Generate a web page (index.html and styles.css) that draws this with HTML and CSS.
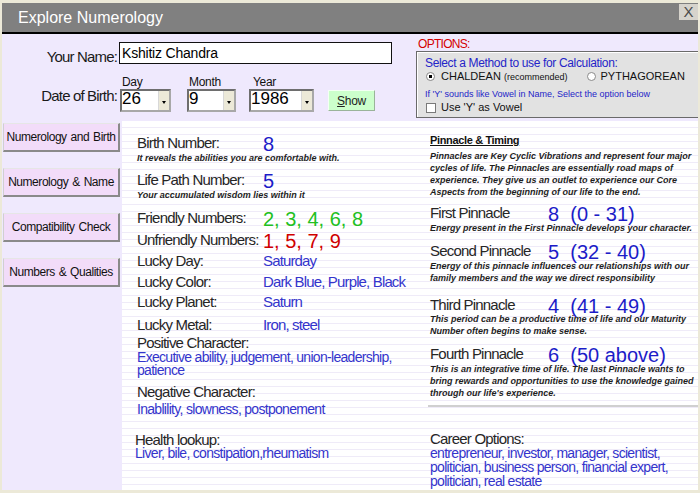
FILE: index.html
```html
<!DOCTYPE html>
<html>
<head>
<meta charset="utf-8">
<title>Explore Numerology</title>
<link rel="stylesheet" href="styles.css">
</head>
<body>
<div class="win">
  <div class="titlebar">
    <span class="title">Explore Numerology</span>
    <span class="close">X</span>
  </div>
  <div class="main">
    <div class="top">
      <div class="form">
        <div class="name-row">
          <span class="flabel">Your Name:</span>
          <div class="textbox">Kshitiz Chandra</div>
        </div>
        <div class="dob-row">
          <span class="flabel dob">Date of Birth:</span>
          <div class="field f-day">
            <span class="cap">Day</span>
            <div class="combo w-day"><span class="cv">26</span><span class="drop"><i></i></span></div>
          </div>
          <div class="field f-month">
            <span class="cap">Month</span>
            <div class="combo w-month"><span class="cv">9</span><span class="drop"><i></i></span></div>
          </div>
          <div class="field f-year">
            <span class="cap cap-year">Year</span>
            <div class="combo w-year"><span class="cv">1986</span><span class="drop"><i></i></span></div>
          </div>
          <div class="show"><u>S</u>how</div>
        </div>
      </div>
      <div class="opts">
        <div class="opt-title">OPTIONS:</div>
        <div class="opt-box">
          <div class="sel">Select a Method to use for Calculation:</div>
          <div class="radios">
            <span class="radio on"></span>
            <span class="rl">CHALDEAN <small>(recommended)</small></span>
            <span class="radio second"></span>
            <span class="rl rl2">PYTHAGOREAN</span>
          </div>
          <div class="hint">If 'Y' sounds like Vowel in Name, Select the option below</div>
          <div class="chk"><span class="box"></span><span>Use 'Y' as Vowel</span></div>
        </div>
      </div>
    </div>
    <div class="body">
      <div class="nav">
        <div class="navbtn">Numerology and Birth</div>
        <div class="navbtn">Numerology &amp; Name</div>
        <div class="navbtn">Compatibility Check</div>
        <div class="navbtn">Numbers &amp; Qualities</div>
      </div>
      <div class="panel">
        <div class="colL">
          <div class="row">
            <span class="lbl">Birth Number:</span><span class="big">8</span>
          </div>
          <div class="note">It reveals the abilities you are comfortable with.</div>

          <div class="row mt7">
            <span class="lbl">Life Path Number:</span><span class="big">5</span>
          </div>
          <div class="note">Your accumulated wisdom lies within it</div>

          <div class="row mt8">
            <span class="lbl">Friendly Numbers:</span><span class="big green">2, 3, 4, 6, 8</span>
          </div>
          <div class="row mt4">
            <span class="lbl">Unfriendly Numbers:</span><span class="big red">1, 5, 7, 9</span>
          </div>
          <div class="row mt3">
            <span class="lbl">Lucky Day:</span><span class="v">Saturday</span>
          </div>
          <div class="row mt3">
            <span class="lbl">Lucky Color:</span><span class="v">Dark Blue, Purple, Black</span>
          </div>
          <div class="row mt2">
            <span class="lbl">Lucky Planet:</span><span class="v">Saturn</span>
          </div>
          <div class="row mt5">
            <span class="lbl">Lucky Metal:</span><span class="v">Iron, steel</span>
          </div>

          <div class="lbl lh16 mt1">Positive Character:</div>
          <div class="v lh13 tight">Executive ability, judgement, union-leadership,<br>patience</div>

          <div class="lbl lh16 mt7">Negative Character:</div>
          <div class="v lh16 mt1 tight">Inablility, slowness, postponement</div>

          <div class="lbl lh14 mt16 shift">Health lookup:</div>
          <div class="v lh13 tight shift">Liver, bile, constipation,rheumatism</div>
        </div>

        <div class="colR">
          <div class="phead">Pinnacle &amp; Timing</div>
          <div class="note mt3">Pinnacles are Key Cyclic Vibrations and represent four major<br>cycles of life. The Pinnacles are essentially road maps of<br>experience. They give us an outlet to experience our Core<br>Aspects from the beginning of our life to the end.</div>

          <div class="row mt7">
            <span class="lbl plbl">First Pinnacle</span><span class="pval">8  (0 - 31)</span>
          </div>
          <div class="note mt1">Energy present in the First Pinnacle develops your character.</div>

          <div class="row mt9">
            <span class="lbl plbl">Second Pinnacle</span><span class="pval">5  (32 - 40)</span>
          </div>
          <div class="note mt1">Energy of this pinnacle influences our relationships with our<br>family members and the way we direct responsibility</div>

          <div class="row mt13">
            <span class="lbl plbl">Third Pinnacle</span><span class="pval">4  (41 - 49)</span>
          </div>
          <div class="note">This period can be a productive time of life and our Maturity<br>Number often begins to make sense.</div>

          <div class="row mt9">
            <span class="lbl plbl">Fourth Pinnacle</span><span class="pval">6  (50 above)</span>
          </div>
          <div class="note mt1">This is an integrative time of life. The last Pinnacle wants to<br>bring rewards and opportunities to use the knowledge gained<br>through our life's experience.</div>

          <div class="sep"></div>

          <div class="lbl lh14 career">Career Options:</div>
          <div class="v lh14 tight">entrepreneur, investor, manager, scientist,<br>politician, business person, financial expert,<br>politician, real estate</div>
        </div>
      </div>
    </div>
  </div>
</div>
</body>
</html>
```
FILE: styles.css
```css
* { box-sizing: border-box; }
html, body { margin: 0; padding: 0; }
body {
  width: 700px;
  height: 493px;
  overflow: hidden;
  background: #ece9d8;
  font-family: "Liberation Sans", Arial, sans-serif;
  color: #222;
}
.win {
  width: 700px;
  height: 493px;
  padding: 3px 2px 3px 2px;
  display: flex;
  flex-direction: column;
}
.titlebar {
  height: 31px;
  background: #808080;
  border-bottom: 2px solid #000;
  display: flex;
  justify-content: space-between;
  align-items: flex-start;
}
.title {
  font-size: 16px;
  line-height: 29px;
  color: #fff;
  padding-left: 16px;
}
.close {
  margin-top: 1px;
  width: 19px;
  height: 16px;
  background: #d6d3cc;
  color: #4a4a4a;
  font-size: 15px;
  line-height: 16px;
  text-align: center;
}
.main {
  flex: 1;
  background: #efe9fd;
  display: flex;
  flex-direction: column;
}
.top { height: 87px; display: flex; }
.form { width: 414px; }
.opts { flex: 1; padding-top: 3px; }

/* form */
.name-row { display: flex; margin-top: 8px; height: 22px; }
.flabel {
  width: 115px;
  text-align: right;
  font-size: 15px;
  line-height: 18px;
  letter-spacing: -0.85px;
  color: #1a1a1a;
  margin-right: 3px;
  white-space: nowrap;
}
.name-row .flabel { margin-top: 6px; margin-right: 2px; }
.textbox {
  width: 273px;
  height: 22px;
  border: 1px solid #111;
  background: #fff;
  font-size: 14px;
  line-height: 20px;
  padding-left: 2px;
  letter-spacing: -0.2px;
  color: #000;
}
.dob-row { display: flex; align-items: flex-end; margin-top: 12px; }
.dob { margin-bottom: 7px; }
.field { display: flex; flex-direction: column; }
.f-day { margin-right: 16px; }
.f-month { margin-right: 13px; }
.f-year { margin-right: 14px; }
.cap {
  font-size: 12px;
  line-height: 13px;
  padding-left: 2px;
  color: #111;
  letter-spacing: -0.3px;
}
.cap-year { padding-left: 4px; }
.combo {
  height: 23px;
  border: 2px solid;
  border-color: #6e6e6e #a8a8a8 #a8a8a8 #6e6e6e;
  background: #fff;
  display: flex;
}
.w-day { width: 51px; }
.w-month { width: 49px; }
.w-year { width: 65px; }
.cv { flex: 1; font-size: 17px; line-height: 16px; color: #000; }
.drop {
  width: 11px;
  background: #ece9d8;
  border-left: 1px solid #d8d8d8;
  display: flex;
  align-items: center;
  justify-content: center;
}
.drop i {
  width: 0;
  height: 0;
  border-left: 2.5px solid transparent;
  border-right: 2.5px solid transparent;
  border-top: 3px solid #000;
  margin-top: 3px;
}
.show {
  width: 47px;
  height: 21px;
  margin-bottom: 1px;
  background: #ccffcc;
  border: 1px solid;
  border-color: #f4fff4 #9ab39a #9ab39a #f4fff4;
  font-size: 12px;
  letter-spacing: -0.3px;
  display: flex;
  align-items: center;
  justify-content: center;
  color: #222;
}

/* options */
.opt-title {
  color: #d40000;
  font-size: 12px;
  line-height: 14px;
  padding-left: 2px;
  letter-spacing: -0.7px;
}
.opt-box {
  height: 67px;
  border: 1px solid #6a6a6a;
  border-right: none;
  background: #e2e2e2;
  box-shadow: inset 1px 1px 0 #fff;
  padding: 4px 0 0 8px;
}
.sel {
  color: #2424c8;
  font-size: 12px;
  line-height: 14px;
  letter-spacing: -0.35px;
}
.radios {
  display: flex;
  align-items: center;
  height: 13px;
  font-size: 11px;
  line-height: 13px;
  color: #111;
}
.radio {
  width: 9px;
  height: 9px;
  border-radius: 50%;
  background: #fff;
  border: 1px solid #8a8a8a;
  margin-left: 1px;
}
.radio.on { background: radial-gradient(circle, #000 0, #000 1.5px, #fff 2px); }
.radio.second { margin-left: 19px; }
.rl { margin-left: 6px; white-space: nowrap; }
.rl2 { margin-left: 5px; }
.rl small { font-size: 9px; }
.hint {
  color: #2424c8;
  font-size: 9px;
  line-height: 12px;
  margin-top: 5px;
  white-space: nowrap;
}
.chk {
  display: flex;
  align-items: center;
  margin-top: 1px;
  font-size: 11px;
  line-height: 13px;
  color: #111;
}
.chk .box {
  width: 10px;
  height: 10px;
  background: #fff;
  border: 1px solid #7a7a7a;
  margin: 0 5px 0 1px;
}

/* body */
.body { flex: 1; display: flex; }
.nav {
  width: 120px;
  padding: 2px 0 0 1px;
  display: flex;
  flex-direction: column;
  gap: 16px;
}
.navbtn {
  width: 117px;
  height: 29px;
  background: #f2dcf9;
  border-top: 1px solid #e6e6e6;
  border-left: 1px solid #d0d0d0;
  border-right: 2px solid #8a8a8a;
  border-bottom: 2px solid #8a8a8a;
  font-size: 12px;
  letter-spacing: -0.45px;
  word-spacing: 1px;
  color: #111;
  display: flex;
  align-items: center;
  justify-content: center;
  white-space: nowrap;
}
.panel {
  flex: 1;
  display: flex;
  background-color: #fff;
  background-image: repeating-linear-gradient(to bottom, #fff 0, #fff 6px, #efebf8 6px, #efebf8 7px);
}
.colL { width: 306px; padding: 13px 0 0 15px; }
.colR { flex: 1; padding-top: 12px; }
.colR > * { margin-left: 2px; }
.colR > .sep { margin-left: 0; }

.row { display: flex; align-items: flex-start; }
.lbl {
  font-size: 15px;
  line-height: 18px;
  letter-spacing: -0.8px;
  color: #262626;
  white-space: nowrap;
}
.colL .row .lbl { width: 126px; }
.big {
  font-size: 20px;
  line-height: 20px;
  margin-bottom: -2px;
  color: #1c1cc8;
  white-space: pre;
}
.green { color: #22c022; }
.red { color: #d00000; }
.v {
  font-size: 15px;
  line-height: 18px;
  letter-spacing: -0.85px;
  color: #3434cc;
  white-space: nowrap;
}
.v.tight { font-size: 14px; letter-spacing: -0.7px; }
.note {
  font-size: 9px;
  font-style: italic;
  font-weight: bold;
  line-height: 12px;
  color: #1e1e1e;
  white-space: nowrap;
}
.lh13 { line-height: 13px; }
.v.lh13 { line-height: 13px; }
.lh14 { line-height: 14px; }
.v.lh14 { line-height: 14px; }
.lh16 { line-height: 16px; }
.v.lh16 { line-height: 16px; }
.mt1 { margin-top: 1px; }
.mt2 { margin-top: 2px; }
.mt3 { margin-top: 3px; }
.mt4 { margin-top: 4px; }
.mt5 { margin-top: 5px; }
.mt7 { margin-top: 7px; }
.mt8 { margin-top: 8px; }
.mt9 { margin-top: 9px; }
.mt13 { margin-top: 13px; }
.mt16 { margin-top: 16px; }
.shift { margin-left: -2px; }

.phead {
  font-size: 11px;
  font-weight: bold;
  line-height: 14px;
  letter-spacing: -0.35px;
  text-decoration: underline;
  color: #111;
}
.plbl { width: 118px; line-height: 16px; }
.pval {
  font-size: 20px;
  line-height: 18px;
  margin-bottom: -2px;
  color: #1c1cc8;
  white-space: pre;
}
.sep { height: 2px; background: #d0d0d0; margin-top: 6px; }
.career { margin-top: 25px; }
```
